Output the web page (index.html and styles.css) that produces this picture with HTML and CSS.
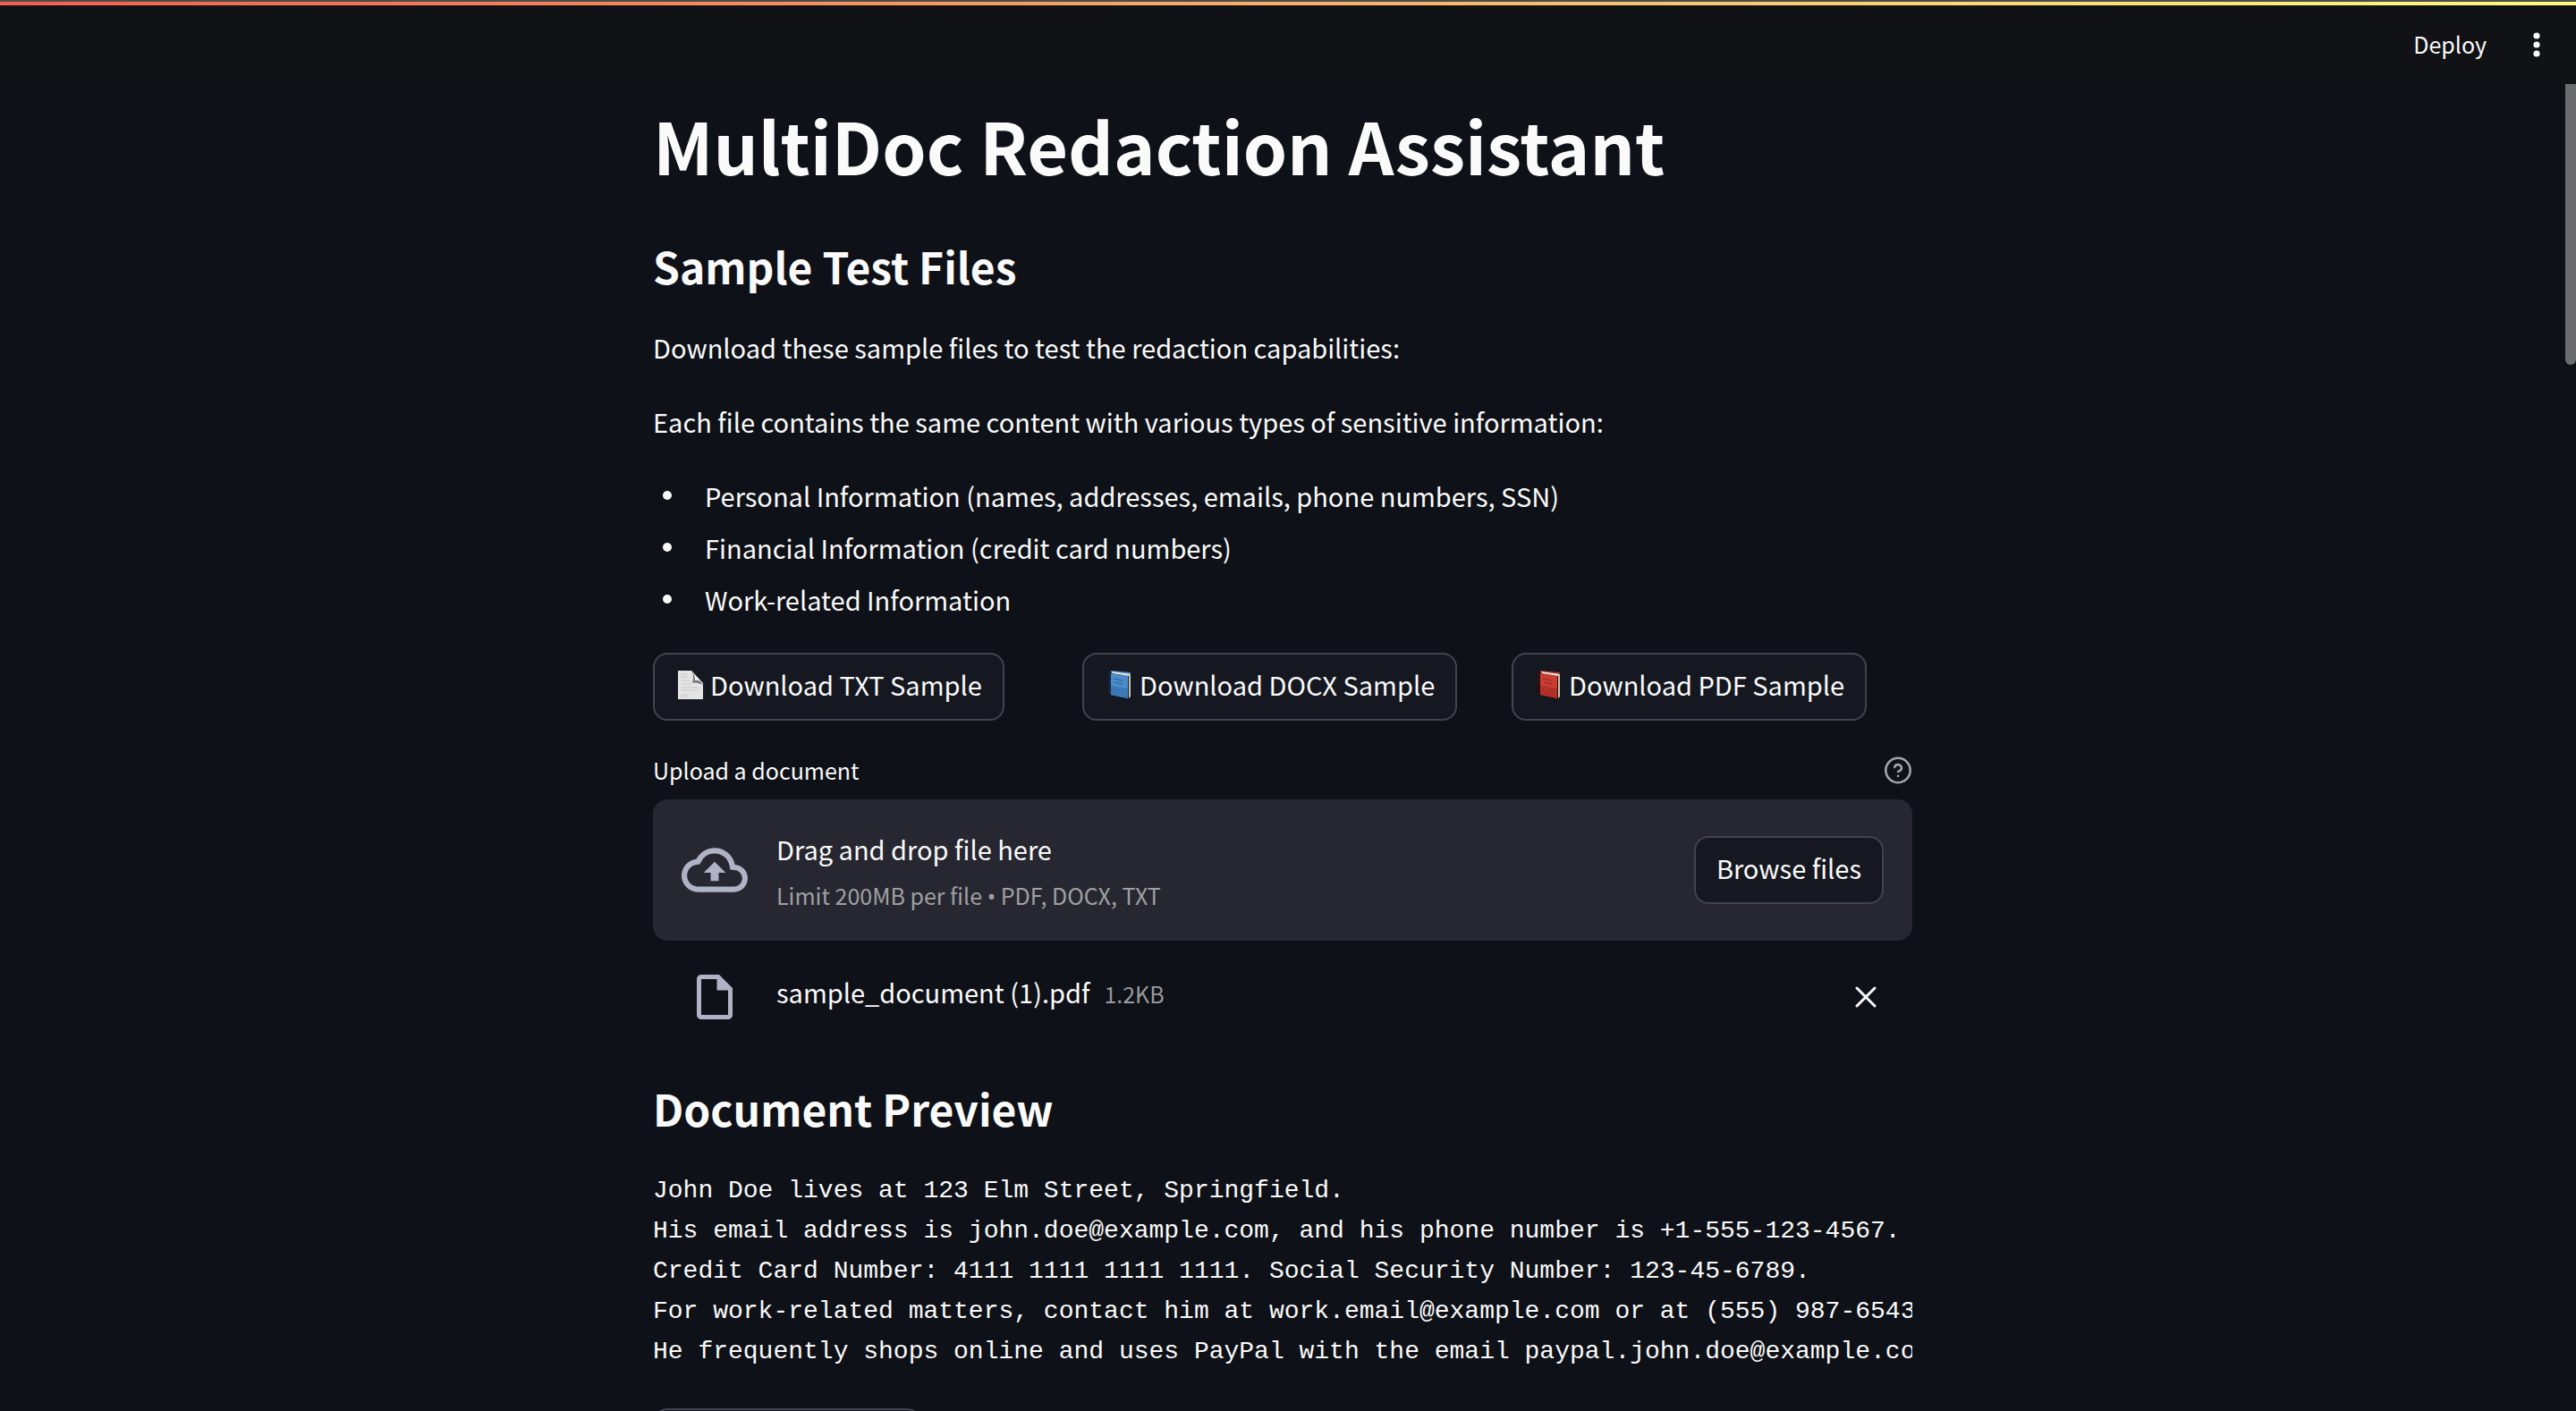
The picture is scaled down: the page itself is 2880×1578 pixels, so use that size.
FILE: index.html
```html
<!DOCTYPE html>
<html lang="en">
<head>
<meta charset="utf-8">
<meta name="viewport" content="width=device-width, initial-scale=1">
<title>MultiDoc Redaction Assistant</title>
<link rel="stylesheet" href="styles.css">
</head>
<body>
<header class="topbar">
  <button class="deploy" type="button">Deploy</button>
  <button class="menu" type="button" aria-label="Main menu">
    <svg width="8" height="28" viewBox="0 0 8 28" fill="currentColor" aria-hidden="true"><circle cx="4" cy="4" r="3.6"/><circle cx="4" cy="14" r="3.6"/><circle cx="4" cy="24" r="3.6"/></svg>
  </button>
</header>
<div class="scroll-thumb" aria-hidden="true"></div>

<main class="page">
  <h1 class="title">MultiDoc Redaction Assistant</h1>

  <section>
    <h2 class="heading">Sample Test Files</h2>
    <p class="text">Download these sample files to test the redaction capabilities:</p>
    <p class="text">Each file contains the same content with various types of sensitive information:</p>
    <ul class="list">
      <li>Personal Information (names, addresses, emails, phone numbers, SSN)</li>
      <li>Financial Information (credit card numbers)</li>
      <li>Work-related Information</li>
    </ul>
    <div class="downloads">
      <div>
        <button class="btn" type="button">
          <svg width="28" height="32" viewBox="0 0 28 32" aria-hidden="true"><path d="M0 0h15l13 14v18H0z" fill="#e4e4e4"/><path d="M15 0c3 4 2 9 1 14 4-1 8 0 12 2z" fill="#777"/><path d="M15 0l13 15c-2-4-6-5-9-4 0-4-1-8-4-11z" fill="#f4f4f4"/><path d="M3 4h8M3 7h9M3 11h10M3 15h11M3 19h21M3 22h21M3 27h9M3 29h7" stroke="#c9c9c9"/></svg>
          <span>Download TXT Sample</span>
        </button>
      </div>
      <div>
        <button class="btn" type="button">
          <svg width="28" height="32" viewBox="0 0 28 32" aria-hidden="true"><path d="M1 1l3-1 22 3v27l-3 2L1 26z" fill="#14243a"/><path d="M4 0l22 2v3L5 3z" fill="#4d93cf"/><path d="M5 2l19 3v25l1-1V4z" fill="#ece8dc"/><path d="M4 3l19 3v25L4 27z" fill="#4a8ccc"/><path d="M4 17l19 3v11L4 27z" fill="#3c78b8"/><path d="M5 1l20 3-1 2L6 3z" fill="#ece8dc"/><path d="M24 5l2-1v25l-2 2z" fill="#c9c3b4"/><path d="M7 9l11 2M8 13l9 2" stroke="#2f6297"/></svg>
          <span>Download DOCX Sample</span>
        </button>
      </div>
      <div>
        <button class="btn" type="button">
          <svg width="28" height="32" viewBox="0 0 28 32" aria-hidden="true"><path d="M1 1l3-1 22 3v27l-3 2L1 26z" fill="#2d100e"/><path d="M4 0l22 2v3L5 3z" fill="#b4382c"/><path d="M5 2l19 3v25l1-1V4z" fill="#ece8dc"/><path d="M4 3l19 3v25L4 27z" fill="#cb3c31"/><path d="M4 17l19 3v11L4 27z" fill="#b22f26"/><path d="M5 1l20 3-1 2L6 3z" fill="#ece8dc"/><path d="M24 5l2-1v25l-2 2z" fill="#c9c3b4"/><path d="M7 9l10 2M9 13l8 2" stroke="#8e261e"/></svg>
          <span>Download PDF Sample</span>
        </button>
      </div>
    </div>
  </section>

  <section class="upload">
    <div class="upload-head">
      <label class="upload-label" for="browse">Upload a document</label>
      <svg width="32" height="32" viewBox="0 0 32 32" fill="none" stroke="#a3a4a6" stroke-width="2.6" stroke-linecap="round" stroke-linejoin="round" role="img" aria-label="Help"><circle cx="16" cy="16.500" r="13.700"/><path d="M12.200 12.900a4 4 0 0 1 7.800 1.200c0 2.600-4 3.800-4 3.800M16 22.900v.01"/></svg>
    </div>
    <div class="dropzone">
      <svg class="cloud" width="74" height="74" viewBox="0 0 24 24" fill="currentColor" aria-hidden="true"><path d="M19.350 10.040A7.490 7.490 0 0 0 12 4C9.110 4 6.600 5.640 5.350 8.040A5.994 5.994 0 0 0 0 14c0 3.310 2.690 6 6 6h13c2.760 0 5-2.240 5-5 0-2.640-2.050-4.780-4.650-4.960zM19 18H6c-2.210 0-4-1.790-4-4 0-2.050 1.530-3.760 3.560-3.970l1.070-.11.500-.95A5.469 5.469 0 0 1 12 6c2.620 0 4.880 1.860 5.390 4.430l.300 1.500 1.530.11A2.980 2.980 0 0 1 22 15c0 1.650-1.350 3-3 3zM8 13h2.550v3h2.900v-3H16l-4-4z"/></svg>
      <div class="drop-text">
        <span class="drop-main">Drag and drop file here</span>
        <span class="drop-hint">Limit 200MB per file <span class="dot">•</span> PDF, DOCX, TXT</span>
      </div>
      <button class="btn" type="button" id="browse"><span>Browse files</span></button>
    </div>
    <div class="file">
      <svg class="file-icon" width="60" height="60" viewBox="0 0 24 24" fill="currentColor" aria-hidden="true"><path d="M14 2H6c-1.100 0-1.990.9-1.990 2L4 20c0 1.100.89 2 1.990 2H18c1.100 0 2-.9 2-2V8l-6-6zM6 20V4h7v5h5v11H6z"/></svg>
      <div class="file-text">
        <span class="file-name">sample_document (1).pdf</span>
        <span class="file-size">1.2KB</span>
      </div>
      <button class="remove" type="button" aria-label="Remove file">
        <svg width="24" height="24" viewBox="0 0 24 24" fill="none" stroke="currentColor" stroke-width="3" stroke-linecap="round" aria-hidden="true"><path d="M2 2l20 20M22 2L2 22"/></svg>
      </button>
    </div>
  </section>

  <section>
    <h2 class="heading">Document Preview</h2>
    <pre class="preview">John Doe lives at 123 Elm Street, Springfield.
His email address is john.doe@example.com, and his phone number is +1-555-123-4567.
Credit Card Number: 4111 1111 1111 1111. Social Security Number: 123-45-6789.
For work-related matters, contact him at work.email@example.com or at (555) 987-6543.
He frequently shops online and uses PayPal with the email paypal.john.doe@example.com.</pre>
    <button class="btn btn-next" type="button" aria-label="Next action"></button>
  </section>
</main>
</body>
</html>
```
FILE: styles.css
```css
*, *::before { box-sizing: border-box; }

html, body { height: 100%; }

body {
  margin: 0;
  padding-right: 12px;
  overflow: hidden;
  background: #0e1117;
  color: #fafafa;
  font-family: "Noto Sans CJK SC", "Noto Sans", sans-serif;
  font-size: 29px;
  line-height: 51px;
}

button {
  margin: 0;
  padding: 0;
  border: 0;
  background: none;
  color: inherit;
  font: inherit;
  cursor: pointer;
}

svg { display: block; flex: none; }

/* Top bar */
.topbar {
  position: fixed;
  inset: 0 0 auto 0;
  z-index: 2;
  display: flex;
  align-items: center;
  justify-content: flex-end;
  gap: 52px;
  height: 94px;
  padding: 6px 40px 0 0;
  background: #111216;
}

.topbar::before {
  content: "";
  position: absolute;
  inset: 0 0 auto 0;
  height: 6px;
  border-top: 2px solid #4a4b4b;
  background: linear-gradient(90deg, #f25f4f, #fffd80);
}

.deploy { font-size: 25px; line-height: 40px; padding-bottom: 2px; }

.scroll-thumb {
  position: fixed;
  top: 94px;
  right: 0;
  width: 12px;
  height: 314px;
  border-radius: 0 0 6px 6px;
  background: #6b6c70;
}

/* Content column */
.page {
  max-width: 1408px;
  margin: 0 auto;
  padding-top: 109px;
}

.title {
  margin: 0 0 49px;
  font-size: 79px;
  line-height: 106px;
  font-weight: 700;
}

.heading {
  margin: 0 0 32px;
  font-size: 48px;
  line-height: 67px;
  font-weight: 700;
}

.text { margin: 0 0 32px; }

.list {
  margin: -4px 0 31px;
  padding: 0 0 0 11px;
  line-height: 58px;
  list-style: none;
}

.list li {
  display: flex;
  align-items: center;
  gap: 37px;
}

.list li::before {
  content: "";
  width: 10px;
  height: 10px;
  border-radius: 50%;
  background: currentColor;
}

.downloads {
  display: grid;
  grid-template-columns: repeat(3, 1fr);
  gap: 32px;
}

.btn {
  display: flex;
  align-items: center;
  gap: 8px;
  height: 76px;
  padding: 0 23px 5px;
  border: 2px solid #41444c;
  border-radius: 16px;
  background: #151820;
  white-space: nowrap;
}

.btn svg { margin-left: 3px; }

/* Uploader */
.upload { padding: 35px 0 61px; }

.upload-head {
  display: flex;
  align-items: center;
  justify-content: space-between;
  margin-bottom: 13px;
}

.upload-label { font-size: 25px; line-height: 40px; }

.dropzone {
  display: flex;
  align-items: center;
  gap: 32px;
  min-height: 158px;
  padding: 0 32px;
  border-radius: 16px;
  background: #262730;
}

.cloud, .file-icon { color: #b0b2c5; }

.drop-text {
  display: flex;
  flex: 1;
  flex-direction: column;
  gap: 6px;
  padding-bottom: 2px;
}

.drop-hint, .file-size {
  color: #a0a0a3;
  font-size: 25px;
  line-height: 40px;
}

.dot { font-family: "Noto Sans", sans-serif; line-height: 1; }

.file-size { color: #999a9c; }

.file {
  display: flex;
  align-items: center;
  margin-top: 32px;
  padding: 0 40px 0 39px;
}

.file-text {
  display: flex;
  flex: 1;
  align-items: baseline;
  gap: 16px;
  padding: 0 0 10px 39px;
}

/* Preview */
.preview {
  margin: 0 0 41px;
  padding-top: 4px;
  overflow: hidden;
  font-family: "Liberation Mono", monospace;
  font-size: 28px;
  line-height: 45px;
}

.btn-next { width: 300px; }
```
